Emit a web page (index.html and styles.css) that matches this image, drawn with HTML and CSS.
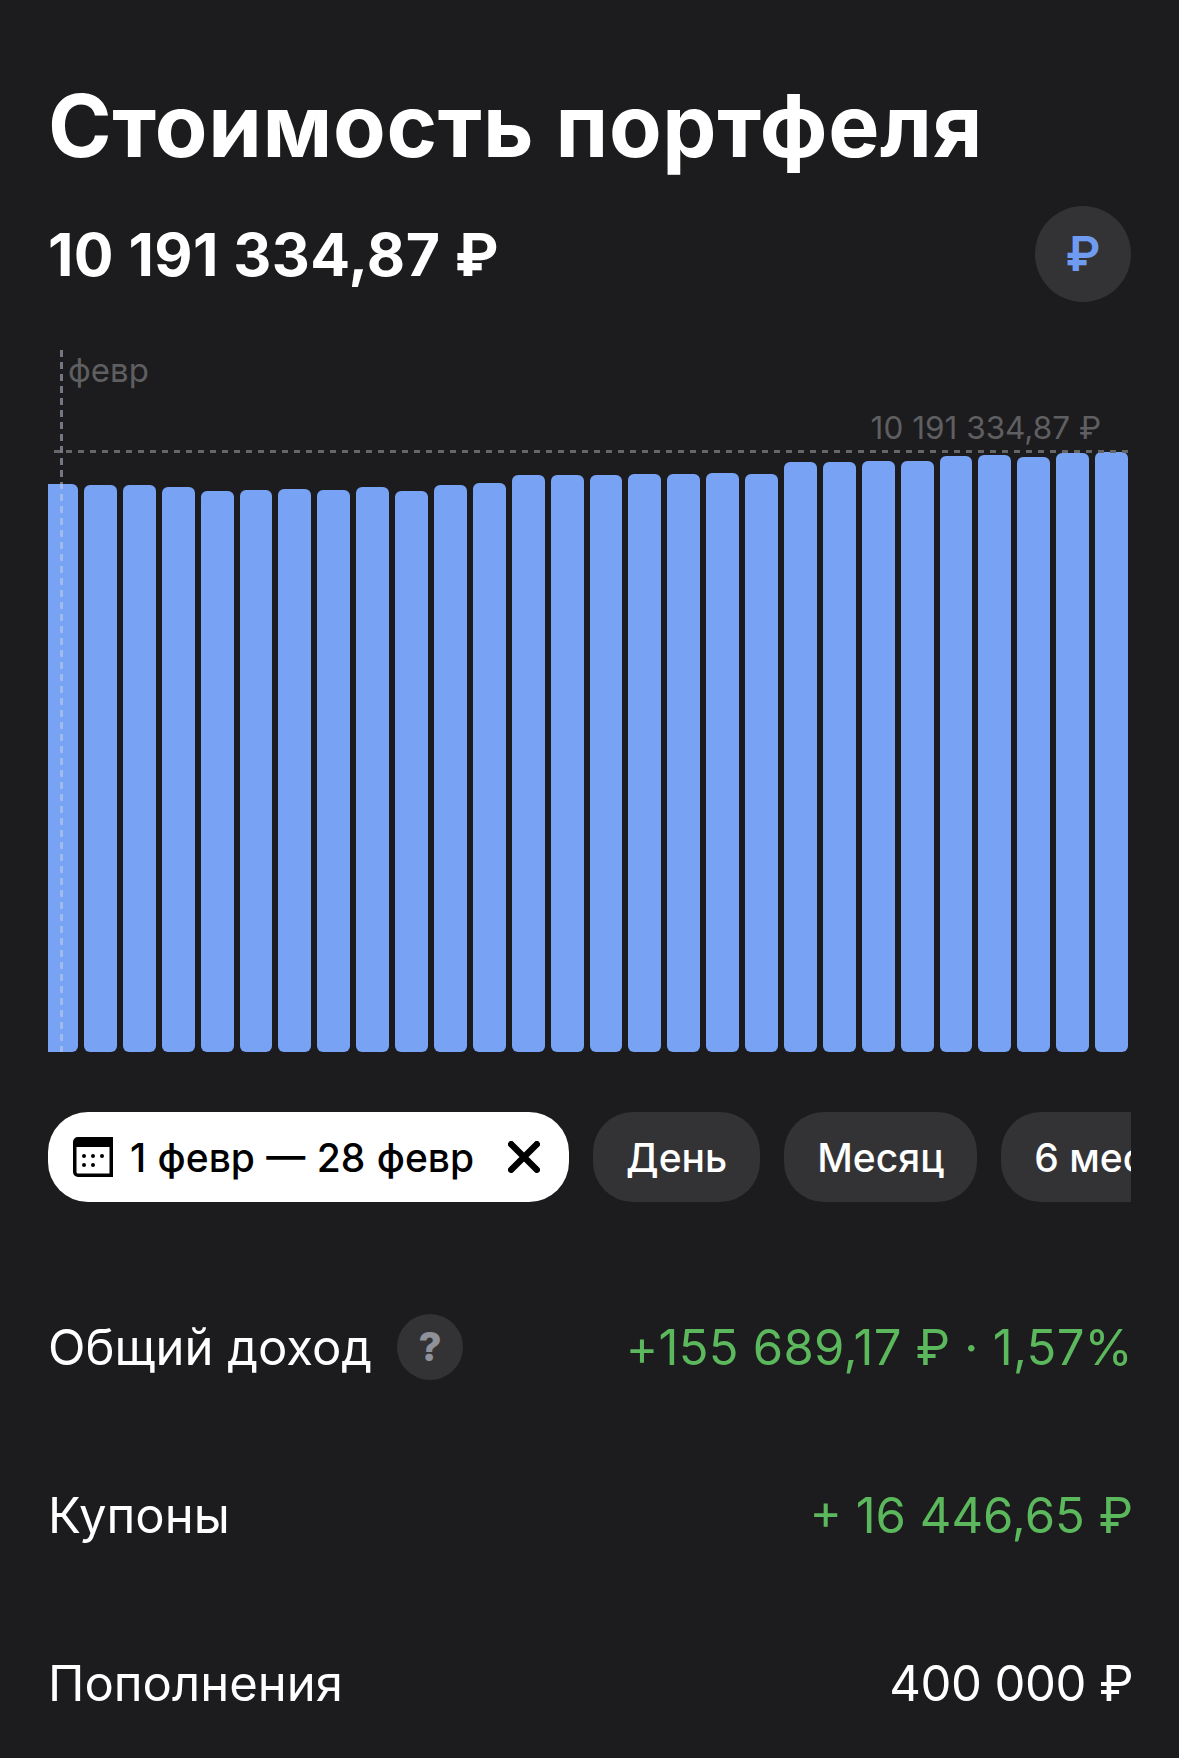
FILE: index.html
```html
<!DOCTYPE html>
<html lang="ru">
<head>
  <meta charset="UTF-8">
  <title>Стоимость портфеля</title>
  <link rel="stylesheet" href="styles.css">
</head>
<body>

  <div class="page">
    <h1 class="title">Стоимость портфеля</h1>

    <div class="summary">
      <div class="amount">10 191 334,87 ₽</div>
      <div class="currency">₽</div>
    </div>

    <div class="chart">
      <div class="bars">
        <div class="bar bar-first" style="height:568px"></div>
        <div class="bar" style="height:567px"></div>
        <div class="bar" style="height:567px"></div>
        <div class="bar" style="height:565px"></div>
        <div class="bar" style="height:561px"></div>
        <div class="bar" style="height:562px"></div>
        <div class="bar" style="height:563px"></div>
        <div class="bar" style="height:562px"></div>
        <div class="bar" style="height:565px"></div>
        <div class="bar" style="height:561px"></div>
        <div class="bar" style="height:567px"></div>
        <div class="bar" style="height:569px"></div>
        <div class="bar" style="height:577px"></div>
        <div class="bar" style="height:577px"></div>
        <div class="bar" style="height:577px"></div>
        <div class="bar" style="height:578px"></div>
        <div class="bar" style="height:578px"></div>
        <div class="bar" style="height:579px"></div>
        <div class="bar" style="height:578px"></div>
        <div class="bar" style="height:590px"></div>
        <div class="bar" style="height:590px"></div>
        <div class="bar" style="height:591px"></div>
        <div class="bar" style="height:591px"></div>
        <div class="bar" style="height:596px"></div>
        <div class="bar" style="height:597px"></div>
        <div class="bar" style="height:595px"></div>
        <div class="bar" style="height:599px"></div>
        <div class="bar" style="height:600px"></div>
      </div>
      <div class="line-v"></div>
      <div class="line-h"></div>
      <span class="label-month">февр</span>
      <span class="label-max">10 191 334,87 ₽</span>
    </div>

    <div class="pills">
      <div class="pill pill-active">
        <svg class="icon-cal" viewBox="0 0 40 40">
          <path fill="#000" d="M5 0h35v40H5a5 5 0 0 1-5-5V5a5 5 0 0 1 5-5zM3.500 10v25a1.500 1.500 0 0 0 1.500 1.500h31.500V10z"/>
          <circle cx="11" cy="19" r="2"/><circle cx="20" cy="19" r="2"/><circle cx="29" cy="19" r="2"/>
          <circle cx="11" cy="28" r="2"/><circle cx="20" cy="28" r="2"/>
        </svg>
        <span>1 февр — 28 февр</span>
        <svg class="icon-close" viewBox="0 0 30 30">
          <path d="M3 3l24 24M27 3L3 27" stroke="#000" stroke-width="6" stroke-linecap="round"/>
        </svg>
      </div>
      <div class="pill">День</div>
      <div class="pill">Месяц</div>
      <div class="pill">6 месяцев</div>
    </div>

    <div class="rows">
      <div class="row">
        <div class="row-name">Общий доход <span class="hint">?</span></div>
        <div class="row-value green wide">+155 689,17 ₽ · 1,57%</div>
      </div>
      <div class="row">
        <div class="row-name">Купоны</div>
        <div class="row-value green">+ 16 446,65 ₽</div>
      </div>
      <div class="row">
        <div class="row-name">Пополнения</div>
        <div class="row-value narrow">400 000 ₽</div>
      </div>
    </div>
  </div>

</body>
</html>
```

FILE: styles.css
```css
html, body {
  margin: 0;
  height: 1758px;
  overflow: hidden;
  background: #1c1c1e;
}
.page {
  padding: 0 48px;
  color: #fff;
  font-family: Inter, "Noto Sans", sans-serif;
}
.title {
  margin: 0;
  padding-top: 78px;
  font-size: 86px;
  line-height: 96px;
  font-weight: 700;
  letter-spacing: 0.7px;
  white-space: nowrap;
}
.summary {
  display: flex;
  justify-content: space-between;
  align-items: center;
  margin-top: 32px;
}
.amount {
  font-size: 59px;
  font-weight: 700;
  letter-spacing: 0.4px;
}
.currency {
  width: 96px;
  height: 96px;
  border-radius: 50%;
  background: #333335;
  color: #6f9cf0;
  font-size: 48px;
  font-weight: 600;
  line-height: 96px;
  text-align: center;
}
.chart {
  position: relative;
  width: 1080px;
  height: 702px;
  margin-top: 48px;
}
.bars {
  display: flex;
  align-items: flex-end;
  gap: 6px;
  height: 100%;
}
.bar {
  flex: 1;
  background: #78a3f5;
  border-radius: 6px;
}
.bar-first {
  flex: 0 0 30px;
  border-radius: 0 6px 6px 0;
}
.line-v {
  position: absolute;
  left: 12px;
  top: 0;
  bottom: 0;
  width: 3px;
  background: repeating-linear-gradient(to bottom, rgba(200, 210, 230, 0.5) 0 7px, transparent 7px 12px);
}
.line-h {
  position: absolute;
  left: 6px;
  right: 0;
  top: 100px;
  height: 3px;
  background: repeating-linear-gradient(to right, #666668 0 6px, transparent 6px 12px);
}
.label-month, .label-max {
  position: absolute;
  color: #5f5f61;
  line-height: 36px;
}
.label-month {
  left: 20px;
  top: 2px;
  font-size: 33px;
}
.label-max {
  right: 27px;
  top: 60px;
  font-size: 31.500px;
}
.pills {
  display: flex;
  gap: 24px;
  margin-top: 60px;
  overflow: hidden;
}
.pill {
  flex: none;
  display: flex;
  align-items: center;
  height: 90px;
  padding: 0 33px;
  border-radius: 40px;
  background: #333335;
  font-size: 39px;
  font-weight: 500;
}
.pill-active {
  padding: 0 29px 0 25px;
  background: #fff;
  color: #000;
  word-spacing: 1px;
}
.icon-cal {
  width: 40px;
  height: 40px;
  margin-right: 17px;
}
.icon-close {
  width: 32px;
  height: 32px;
  margin-left: 34px;
}
.rows {
  margin-top: 61px;
}
.row {
  display: flex;
  justify-content: space-between;
  align-items: center;
  height: 168px;
  font-size: 49px;
}
.row-name {
  display: flex;
  align-items: center;
  gap: 25px;
}
.row-value {
  margin-right: -2px;
}
.wide {
  letter-spacing: 0.25px;
}
.narrow {
  letter-spacing: -0.5px;
}
.hint {
  width: 66px;
  height: 66px;
  border-radius: 50%;
  background: #333335;
  color: #8e9199;
  font-size: 40px;
  font-weight: 800;
  line-height: 66px;
  text-align: center;
}
.green {
  color: #5cb85c;
}
```
